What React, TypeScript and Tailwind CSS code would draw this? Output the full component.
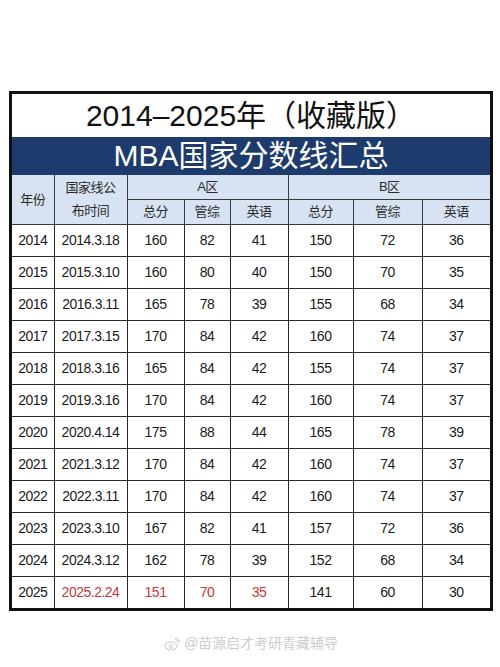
import React from "react";

type Row = {
  year: string;
  date: string;
  a: [number, number, number];
  b: [number, number, number];
  highlight?: boolean;
};

const rows: Row[] = [
  { year: "2014", date: "2014.3.18", a: [160, 82, 41], b: [150, 72, 36] },
  { year: "2015", date: "2015.3.10", a: [160, 80, 40], b: [150, 70, 35] },
  { year: "2016", date: "2016.3.11", a: [165, 78, 39], b: [155, 68, 34] },
  { year: "2017", date: "2017.3.15", a: [170, 84, 42], b: [160, 74, 37] },
  { year: "2018", date: "2018.3.16", a: [165, 84, 42], b: [155, 74, 37] },
  { year: "2019", date: "2019.3.16", a: [170, 84, 42], b: [160, 74, 37] },
  { year: "2020", date: "2020.4.14", a: [175, 88, 44], b: [165, 78, 39] },
  { year: "2021", date: "2021.3.12", a: [170, 84, 42], b: [160, 74, 37] },
  { year: "2022", date: "2022.3.11", a: [170, 84, 42], b: [160, 74, 37] },
  { year: "2023", date: "2023.3.10", a: [167, 82, 41], b: [157, 72, 36] },
  { year: "2024", date: "2024.3.12", a: [162, 78, 39], b: [152, 68, 34] },
  { year: "2025", date: "2025.2.24", a: [151, 70, 35], b: [141, 60, 30], highlight: true },
];

const font = {
  fontFamily: '"Liberation Sans", "Noto Sans CJK SC", sans-serif',
};

const cell = "border border-[#2a2a2a] text-center align-middle p-0";
const headCell = "border border-[#3a3a3a] text-center align-middle p-0 text-[13px] text-[#2a2a2a] font-normal";

export default function App() {
  return (
    <div className="w-[500px] h-[667px] bg-white pt-[91px] px-[9px]" style={font}>
      <div className="w-[484px] border-[3px] border-[#111] bg-white">
        {/* Title */}
        <div className="h-[43px] flex items-center justify-center text-[30px] text-[#111] leading-none">
          2014–2025年（收藏版）
        </div>
        {/* Band */}
        <div className="h-[38px] bg-[#1d3b6c] flex items-center justify-center text-[30px] text-white leading-none">
          MBA国家分数线汇总
        </div>
        <table className="w-full table-fixed border-collapse border-hidden text-[14px] tracking-[-0.5px] text-[#1a1a1a]">
          <colgroup>
            <col className="w-[42px]" />
            <col className="w-[73px]" />
            <col className="w-[57px]" />
            <col className="w-[46px]" />
            <col className="w-[58px]" />
            <col className="w-[65px]" />
            <col className="w-[69px]" />
            <col className="w-[68px]" />
          </colgroup>
          <thead className="bg-[#d7e3f2]">
            <tr className="h-[24px]">
              <th rowSpan={2} className={headCell}>年份</th>
              <th rowSpan={2} className={`${headCell} leading-[23px]`}>
                国家线公
                <br />
                布时间
              </th>
              <th colSpan={3} className={headCell}>A区</th>
              <th colSpan={3} className={headCell}>B区</th>
            </tr>
            <tr className="h-[25px]">
              <th className={headCell}>总分</th>
              <th className={headCell}>管综</th>
              <th className={headCell}>英语</th>
              <th className={headCell}>总分</th>
              <th className={headCell}>管综</th>
              <th className={headCell}>英语</th>
            </tr>
          </thead>
          <tbody>
            {rows.map((r) => {
              const red = r.highlight ? "text-[#c8383d]" : "";
              return (
                <tr key={r.year} className="h-[32px]">
                  <td className={cell}>{r.year}</td>
                  <td className={`${cell} ${red}`}>{r.date}</td>
                  <td className={`${cell} ${red}`}>{r.a[0]}</td>
                  <td className={`${cell} ${red}`}>{r.a[1]}</td>
                  <td className={`${cell} ${red}`}>{r.a[2]}</td>
                  <td className={cell}>{r.b[0]}</td>
                  <td className={cell}>{r.b[1]}</td>
                  <td className={cell}>{r.b[2]}</td>
                </tr>
              );
            })}
          </tbody>
        </table>
      </div>
      {/* Watermark */}
      <div className="mt-[22px] flex items-center justify-center gap-1 text-[14px] text-[#cdcdcd] pl-[2px]">
        <svg width="16" height="14" viewBox="0 0 16 14" fill="none" stroke="#d2d2d2" strokeWidth="1.2">
          <ellipse cx="7" cy="9" rx="6" ry="4" />
          <circle cx="7" cy="9.5" r="1.6" />
          <path d="M11 2.5a3 3 0 0 1 3 3" />
          <path d="M11 0.8a4.8 4.8 0 0 1 4.6 4.7" />
        </svg>
        <span>@苗源启才考研青藏辅导</span>
      </div>
    </div>
  );
}
